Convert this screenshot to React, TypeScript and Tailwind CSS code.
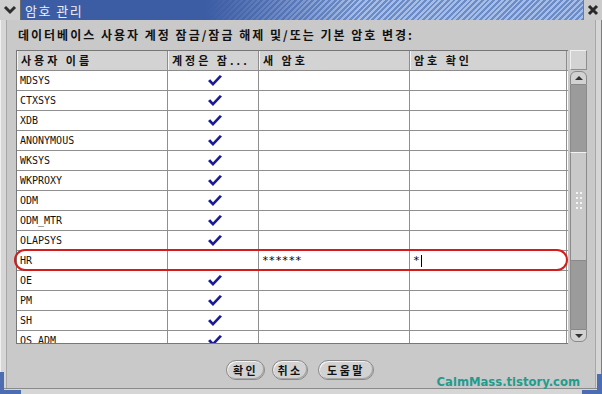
import React from "react";

const users = [
  "MDSYS",
  "CTXSYS",
  "XDB",
  "ANONYMOUS",
  "WKSYS",
  "WKPROXY",
  "ODM",
  "ODM_MTR",
  "OLAPSYS",
  "HR",
  "OE",
  "PM",
  "SH",
  "QS_ADM",
];

const ko = { fontFamily: '"Noto Sans CJK KR", "Noto Sans", sans-serif' };
const mono = { fontFamily: '"DejaVu Sans Mono", "Liberation Mono", monospace' };

function Check() {
  return (
    <svg width="14" height="11" viewBox="0 0 14 11">
      <path d="M0 6 L2.2 4.3 L5 7.2 L11.8 0 L14 1.6 L5 11 Z" fill="#1b1b98" />
    </svg>
  );
}

function TitleBar() {
  return (
    <div className="flex h-[20px] shrink-0">
      <div className="w-[21px] bg-[#cfcfcf] border-r border-[#6b6b6b] flex items-center justify-center">
        <svg width="14" height="10" viewBox="0 0 14 10">
          <polyline points="2,2 7,7 12,2" fill="none" stroke="#2e2e2e" strokeWidth="3" />
        </svg>
      </div>
      <div className="flex-1 flex items-center pl-[4px] bg-[linear-gradient(90deg,#3c5ca4_0%,#3c5ca4_33%,rgba(60,92,164,0)_60%),repeating-linear-gradient(-45deg,#6c8cc9_0px,#6c8cc9_2px,#a6bde6_2px,#a6bde6_4px)]">
        <span className="text-[13px] leading-none text-[#e9eef9] tracking-[1.5px]" style={ko}>
          암호 관리
        </span>
      </div>
      <div className="w-[19px] bg-[#cbcbcb] border-l border-[#7a7a7a] flex items-center justify-center">
        <svg width="12" height="12" viewBox="0 0 12 12">
          <path d="M2 2 L10 10 M10 2 L2 10" stroke="#2a2a2a" strokeWidth="3" />
        </svg>
      </div>
    </div>
  );
}

function ScrollBar() {
  return (
    <div className="w-[17px] flex flex-col">
      <div className="h-[20px] bg-[#d3d3d3] border border-[#8e8e8e] border-t-[#f0f0f0] border-l-[#f0f0f0]" />
      <div className="h-[1px]" />
      <div className="h-[14px] bg-[#d2d2d2] border border-[#8a8a8a] rounded-t-[6px] flex items-center justify-center">
        <div className="w-0 h-0 border-l-[4px] border-r-[4px] border-b-[4px] border-l-transparent border-r-transparent border-b-[#333]" />
      </div>
      <div className="h-[67px] bg-[#9b9b9b] border-x border-[#8a8a8a]" />
      <div className="h-[109px] bg-[#c9c9c9] border border-[#8a8a8a] border-t-[#f2f2f2] flex items-center justify-center">
        <div className="grid grid-cols-2 gap-x-[2px] gap-y-[3px] -mt-[12px]">
          {Array.from({ length: 8 }).map((_, i) => (
            <div key={i} className="w-[2px] h-[2px] bg-[#f4f4f4]" />
          ))}
        </div>
      </div>
      <div className="h-[68px] bg-[#9b9b9b] border-x border-[#8a8a8a]" />
      <div className="h-[13px] bg-[#d2d2d2] border border-[#8a8a8a] rounded-b-[6px] flex items-center justify-center">
        <div className="w-0 h-0 border-l-[4px] border-r-[4px] border-t-[4px] border-l-transparent border-r-transparent border-t-[#333]" />
      </div>
    </div>
  );
}

function Table() {
  const header = ["사용자 이름", "계정은 잠...", "새 암호", "암호 확인"];
  const widths = ["w-[151px]", "w-[91px]", "w-[151px]", "w-[157px]"];
  return (
    <div className="flex h-[294px] ml-[9px]">
      <div className="w-[552px] border-l border-t border-b border-[#777] bg-white overflow-hidden flex flex-col">
        <div className="flex h-[20px] shrink-0 bg-[#d3d3d3] border-b border-[#8c8c8c]">
          {header.map((h, i) => (
            <div
              key={h}
              className={`${widths[i]} border-r border-[#8c8c8c] border-l border-l-[#f3f3f3] pl-[3px] flex items-center text-[11px] font-bold text-[#111] tracking-[3px] leading-none whitespace-nowrap overflow-hidden`}
              style={ko}
            >
              {h}
            </div>
          ))}
        </div>
        {users.map((u) => {
          const hr = u === "HR";
          return (
            <div key={u} className="flex h-[20px] shrink-0 border-b border-[#8f8f8f]">
              <div className="w-[151px] border-r border-[#8f8f8f] pl-[3px] flex items-center text-[10px] text-[#111] leading-none" style={mono}>
                {u}
              </div>
              <div className="w-[91px] border-r border-[#8f8f8f] flex items-center justify-center pl-[3px]">
                {!hr && <Check />}
              </div>
              <div className="w-[151px] border-r border-[#8f8f8f] pl-[3px] flex items-center text-[11px] text-black leading-none" style={mono}>
                {hr ? "******" : ""}
              </div>
              <div className="w-[157px] border-r border-[#8f8f8f] pl-[3px] flex items-center text-[11px] text-black leading-none" style={mono}>
                {hr && (
                  <>
                    <span>*</span>
                    <span className="w-[1px] h-[12px] bg-black ml-[1px]" />
                  </>
                )}
              </div>
            </div>
          );
        })}
      </div>
      <div className="w-[2px]" />
      <ScrollBar />
    </div>
  );
}

function Btn({ label, w }: { label: string; w: string }) {
  return (
    <button
      className={`${w} h-[20px] rounded-[10px] bg-[#d2d2d2] border border-[#8a8a8a] shadow-[inset_1px_1px_0_#f4f4f4,inset_-1px_-1px_0_#a6a6a6] text-[11px] font-bold text-[#111] tracking-[2.5px] leading-none flex items-center justify-center`}
      style={ko}
    >
      {label}
    </button>
  );
}

export default function App() {
  return (
    <div className="relative w-[602px] h-[394px] overflow-hidden bg-[#c9c9c9] flex flex-col">
      <TitleBar />
      <div className="flex-1 flex">
        <div className="w-[7px] bg-[#d6d6d6] border-l border-[#efefef] border-r border-r-[#a7a7a7]" />
        <div className="flex-1 flex flex-col">
          <div className="h-[30px] pt-[8px] pl-[11px]">
            <p className="text-[12px] font-bold text-[#111] tracking-[2px] leading-[14px] whitespace-nowrap" style={ko}>
              데이터베이스 사용자 계정 잠금/잠금 해제 및/또는 기본 암호 변경:
            </p>
          </div>
          <Table />
          <div className="flex pl-[219px] pt-[16px]">
            <Btn label="확인" w="w-[39px]" />
            <div className="w-[7px]" />
            <Btn label="취소" w="w-[36px]" />
            <div className="w-[10px]" />
            <Btn label="도움말" w="w-[56px]" />
          </div>
        </div>
        <div className="w-[7px] bg-[#d6d6d6] border-l border-[#a7a7a7] border-r border-r-[#7d7d7d]" />
      </div>
      <div className="h-[6px] shrink-0 bg-[#d6d6d6] border-t border-[#8a8a8a]" />

      {/* watermark */}
      <div
        className="absolute right-[22px] bottom-[5px] text-[11.6px] font-bold text-[#1f9c8e] leading-none"
        style={{ fontFamily: '"DejaVu Sans", Verdana, sans-serif' }}
      >
        CalmMass.tistory.com
      </div>

      {/* blue window corners */}
      <div className="absolute left-0 bottom-0 w-[4px] h-[22px] bg-[#4d6db3]" />
      <div className="absolute left-0 bottom-0 w-[21px] h-[4px] bg-[#4d6db3]" />
      <div className="absolute right-0 bottom-0 w-[5px] h-[20px] bg-[#4d6db3]" />
      <div className="absolute right-0 bottom-0 w-[20px] h-[4px] bg-[#4d6db3]" />

      {/* red annotation around HR row */}
      <div className="absolute left-[14px] top-[249px] w-[554px] h-[22px] border-2 border-[#d41c1c] rounded-[11px] pointer-events-none" />
    </div>
  );
}
